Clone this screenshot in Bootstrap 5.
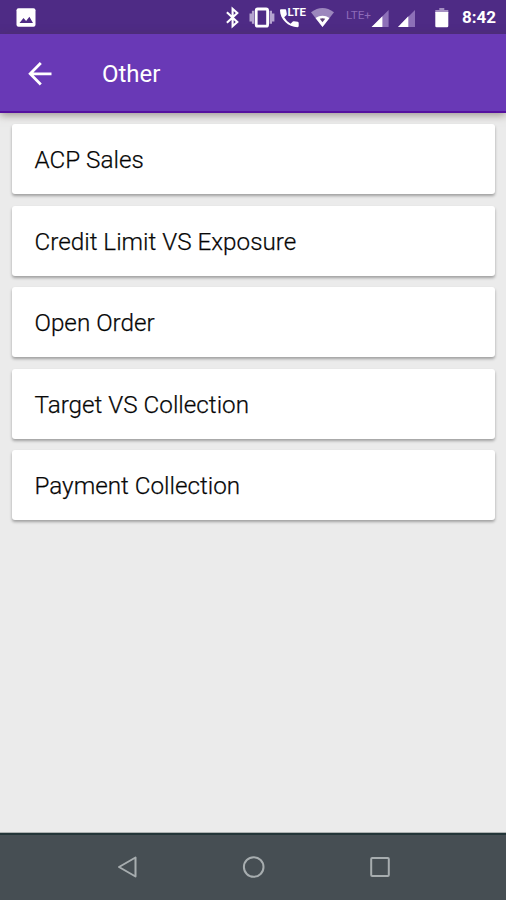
<!DOCTYPE html>
<html lang="en">
<head>
<meta charset="utf-8">
<meta name="viewport" content="width=device-width, initial-scale=1">
<title>Other</title>
<link href="https://cdn.jsdelivr.net/npm/bootstrap@5.3.0/dist/css/bootstrap.min.css" rel="stylesheet">
<style>
body{font-family:Roboto,"Liberation Sans",sans-serif;background:#ebebeb;height:900px;overflow:hidden}
svg{display:block;flex:none;overflow:visible}
.status-bar{height:34px;background:#4e2b85;padding-left:15px;padding-right:10px}
.status-time{font-size:17px;font-weight:700;line-height:36px;width:34px;margin-left:12px;white-space:nowrap}
.app-bar{height:79px;background:#6939b6;border-bottom:2px solid #55119f;box-shadow:0 2px 8px rgba(75,60,50,.5);padding-left:28px}
.app-title{font-size:24px;font-weight:400;line-height:32px;margin-left:50px;padding-top:3px}
.menu-list{padding:11.4px 11px 0 12px;gap:11.5px}
.menu-item{height:70px;border:0;border-radius:3px;box-shadow:0 2px 3px rgba(0,0,0,.32);padding:0 22.5px;color:#000;font-size:24.25px;font-weight:300;line-height:72px;white-space:nowrap;-webkit-text-stroke:.25px #222}
.nav-keys{height:67px;background:#464e53;border-top:2px solid #233538;box-shadow:0 -1px 0 #aeb2b2;padding-left:117px}
.nav-keys .btn{width:22px;height:64px;margin-right:104.5px;border:0}
</style>
</head>
<body class="d-flex flex-column">
<header class="text-white position-relative">
  <div class="status-bar d-flex align-items-center">
    <svg width="22" height="34" viewBox="15 0 22 34"><rect x="16.5" y="8.2" width="19" height="18.6" rx="2" fill="#fff"/><path d="M19.5 23l4-5 2.6 3 3.3-4.2L33 23z" fill="#4e2b85"/></svg>
    <svg class="ms-auto" width="16" height="34" viewBox="224.4 0 16 34" fill="none" stroke="#fff" stroke-width="2.1"><path d="M227.3 12.3l10.4 9.6-4.7 4.3V8.8l4.7 4.2-10.4 9.7"/></svg>
    <svg class="ms-2" width="28" height="34" viewBox="248.6 0 28 34" fill="none"><g stroke="#fff" stroke-width="2.8"><rect x="256.8" y="9" width="11.4" height="17.2" rx="1.5"/></g><g stroke="#b5a4cf" stroke-width="2.4"><path d="M253.7 10.8v13M271.4 10.8v13M251.3 13.5v8M273.8 13.5v8"/></g></svg>
    <svg class="ms-1" width="27" height="34" viewBox="280 0 27 34"><path d="M281 9.2h4.2q.9 0 1 1l.6 3.9q.1.6-.4 1.1l-2.2 2.1q2.3 4.2 6.4 6.4l2.2-2.2q.5-.5 1.1-.3l3.8.6q1 .2 1 1.1v3.2q0 1.1-1.1 1.1C288.3 27 280 19.2 280 10.2q0-1 1-1z" fill="#fff"/><text x="287.6" y="16" font-size="10.5" font-weight="700" textLength="18.4" lengthAdjust="spacingAndGlyphs" fill="#fff" stroke="#4e2b85" stroke-width="1.2" paint-order="stroke">LTE</text></svg>
    <svg class="ms-1" width="24" height="34" viewBox="311 0 24 34"><path d="M311 12.2q11.5-8.5 23 0L322.5 27z" fill="#9c87bd"/><path d="M315.5 18q7-4.5 14 0l-7 9z" fill="#fff"/><path d="M319.8 18.8q2.7-1.1 5.4 0l-2.7 3.5z" fill="#5e4175"/></svg>
    <svg width="26" height="34" viewBox="346 0 26 34" style="margin-left:11px"><text x="346" y="18.5" font-size="11.5" textLength="25" lengthAdjust="spacingAndGlyphs" fill="#8d6ab8">LTE+</text></svg>
    <svg width="18" height="34" viewBox="372.4 0 18 34"><path d="M372 27l17-17v17z" fill="#8d70b8"/><path d="M372 27l10.8-10.8V27z" fill="#fff"/></svg>
    <svg class="ms-2" width="18" height="34" viewBox="398 0 18 34"><path d="M398 27l17-17v17z" fill="#8d70b8"/><path d="M398 27l10.3-10.8V27z" fill="#fff"/></svg>
    <svg width="16" height="34" viewBox="434 0 16 34" style="margin-left:18px"><path d="M439.3 8h5v2h4v3h-13v-3h4z" fill="#a590c2"/><path d="M435.3 12h13v14q0 1.3-1.3 1.3h-10.4q-1.3 0-1.3-1.3z" fill="#fff"/></svg>
    <span class="status-time">8:42</span>
  </div>
  <div class="app-bar d-flex align-items-center">
    <svg width="24" height="26" viewBox="0 -.8 24 26" fill="none" stroke="#fff" stroke-width="2.8" role="img" aria-label="Back"><path d="M23.5 13H2.5M12.8 2.3L2.2 13l10.6 10.7"/></svg>
    <h1 class="app-title mb-0">Other</h1>
  </div>
</header>
<main class="menu-list d-flex flex-column flex-grow-1">
  <a class="menu-item card text-decoration-none" href="#"><span>ACP Sales</span></a>
  <a class="menu-item card text-decoration-none" href="#"><span>Credit Limit VS Exposure</span></a>
  <a class="menu-item card text-decoration-none" href="#"><span>Open Order</span></a>
  <a class="menu-item card text-decoration-none" href="#"><span>Target VS Collection</span></a>
  <a class="menu-item card text-decoration-none" href="#"><span>Payment Collection</span></a>
</main>
<footer class="nav-keys d-flex">
  <button class="btn p-0 d-flex align-items-center" aria-label="Back"><svg width="22" height="24" viewBox="0 0 22 24" fill="none" stroke="#a7adaf" stroke-width="2" stroke-linejoin="round"><path d="M18.5 2.5v19L2 12z"/></svg></button>
  <button class="btn p-0 d-flex align-items-center" aria-label="Home"><svg width="22" height="24" viewBox="0 0 22 24" fill="none" stroke="#a7adaf" stroke-width="2"><circle cx="9.7" cy="12" r="9.8"/></svg></button>
  <button class="btn p-0 d-flex align-items-center" aria-label="Recents"><svg width="22" height="24" viewBox="0 0 22 24" fill="none" stroke="#a7adaf" stroke-width="2"><rect x="1.2" y="3" width="17.6" height="18" rx="1"/></svg></button>
</footer>
<script src="https://cdn.jsdelivr.net/npm/bootstrap@5.3.0/dist/js/bootstrap.bundle.min.js"></script>
</body>
</html>
